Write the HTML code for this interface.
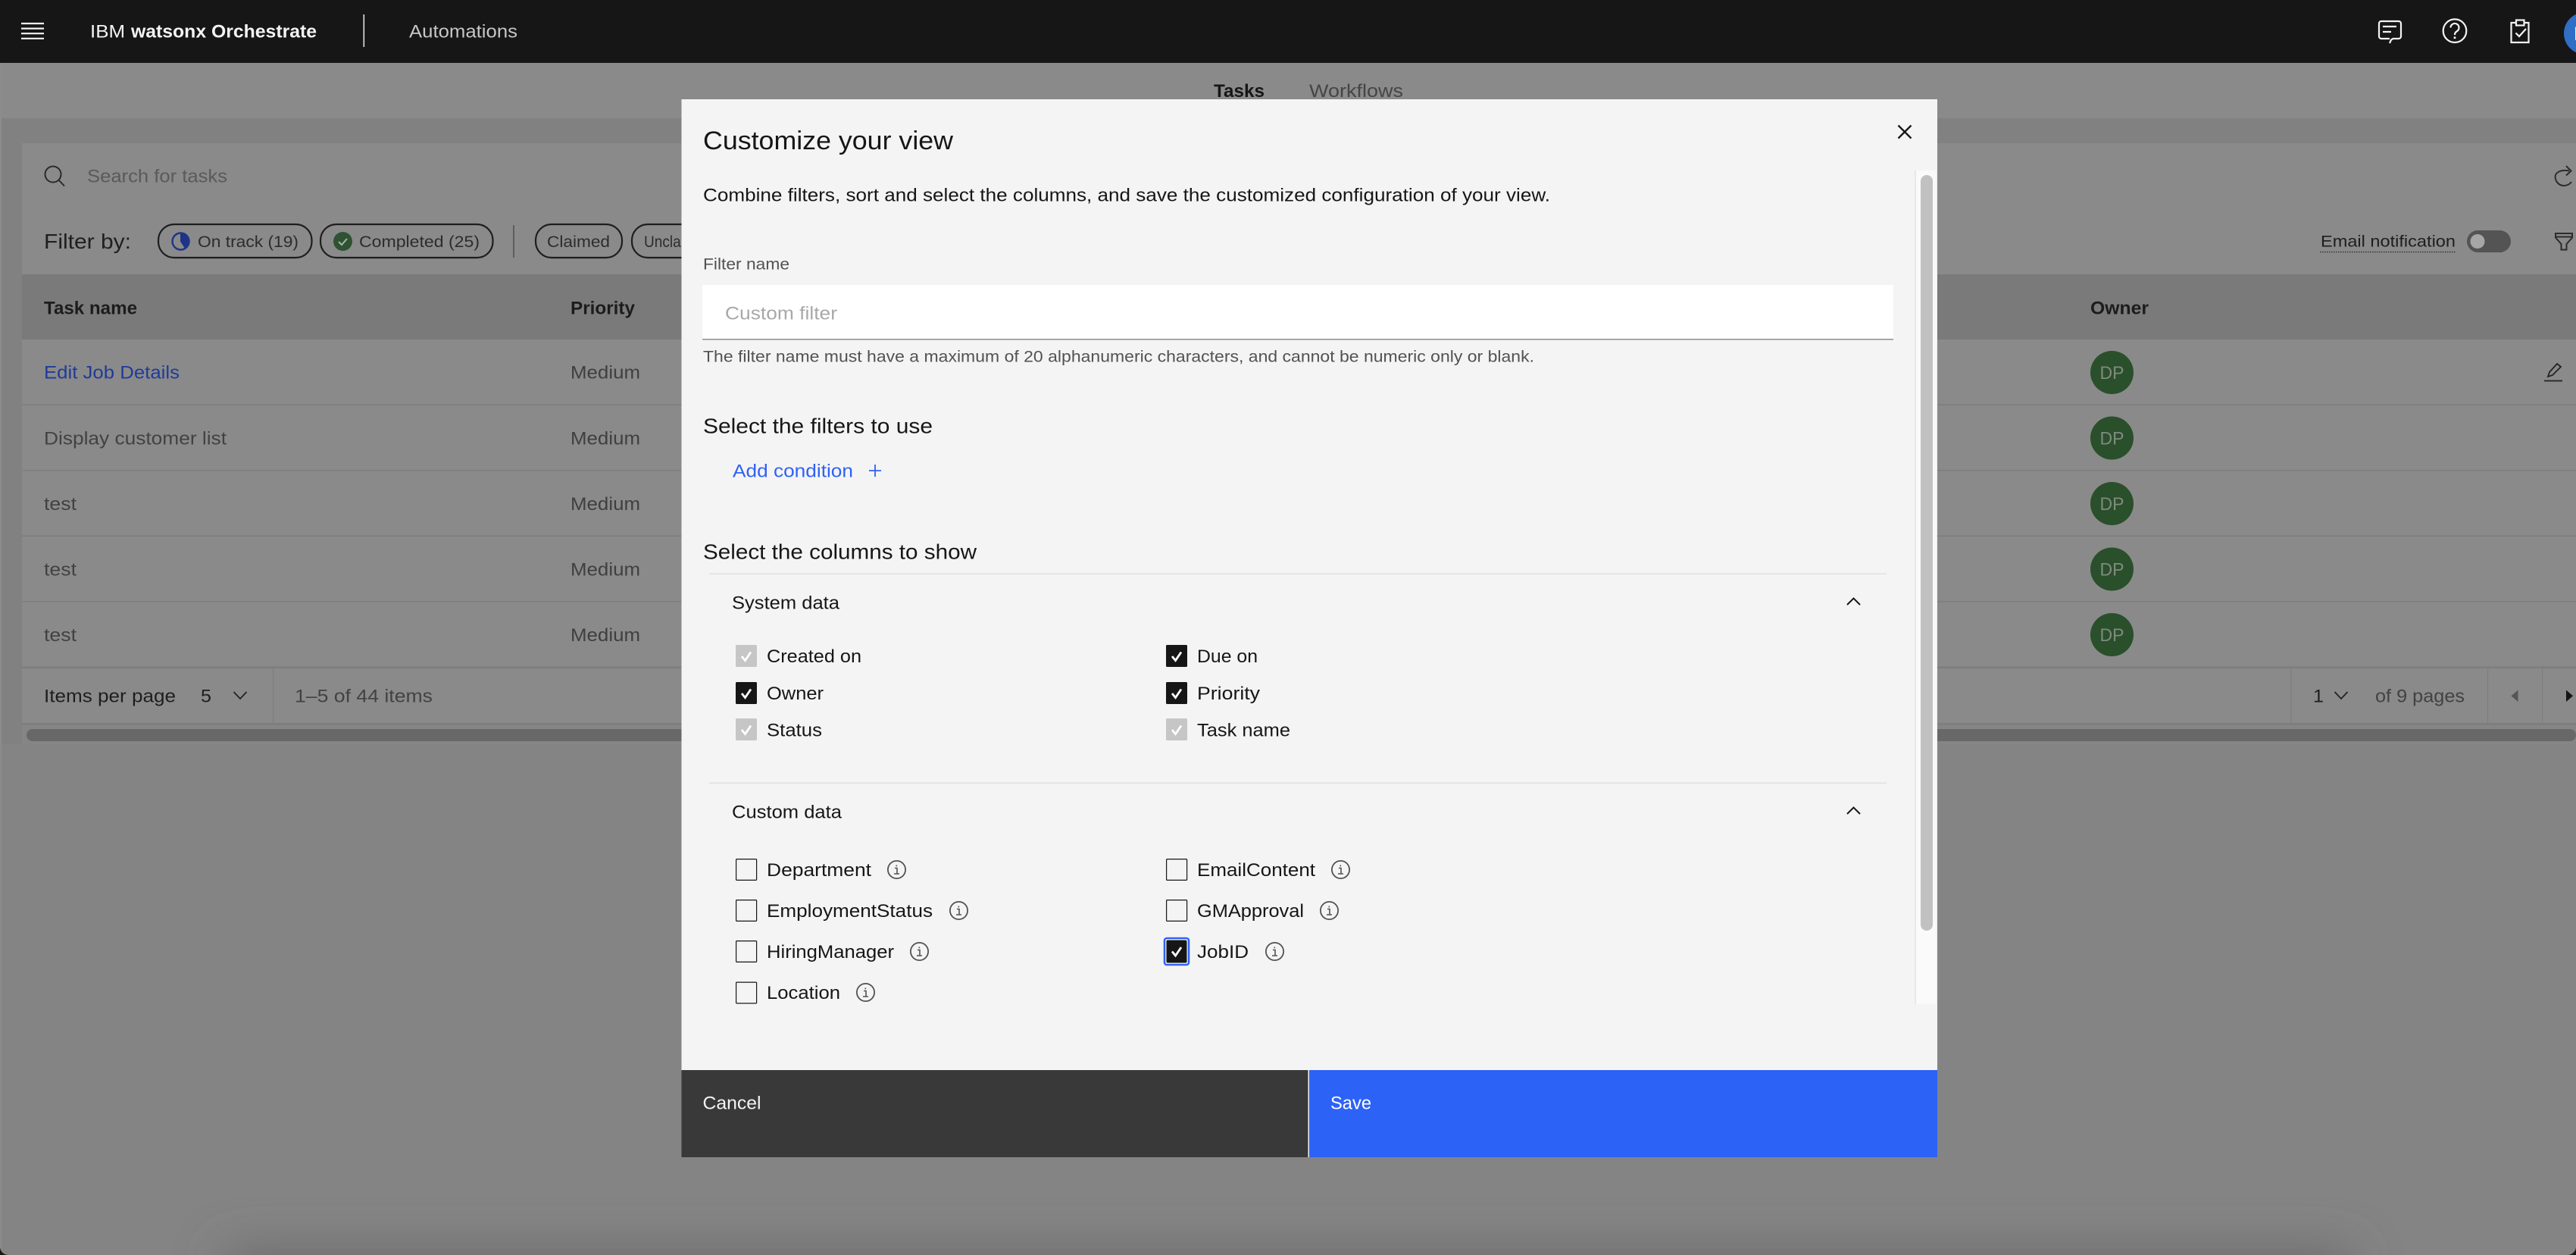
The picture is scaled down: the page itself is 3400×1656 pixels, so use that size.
<!DOCTYPE html>
<html lang="en"><head><meta charset="utf-8"><title>Customize your view</title>
<style>
html,body{margin:0;padding:0;width:3400px;height:1656px;overflow:hidden;background:#848484}
svg{display:block;font-family:"Liberation Sans",sans-serif;font-size:24px}
</style></head><body>
<svg width="3400" height="1656" viewBox="0 0 3400 1656" xmlns="http://www.w3.org/2000/svg">
<defs>
<filter id="blur" x="-10%" y="-200%" width="120%" height="500%"><feGaussianBlur stdDeviation="32"/></filter>
<symbol id="info" viewBox="0 0 25 25" overflow="visible"><circle cx="12.5" cy="12.5" r="11.6" fill="none" stroke="#525252" stroke-width="1.8"/><path d="M10 10.5h3v7M9 18h7M12.3 6.5v1.8" fill="none" stroke="#525252" stroke-width="1.6"/></symbol>
</defs>
<!-- page background -->
<rect width="3400" height="1656" fill="#848484"/>
<rect x="0" y="83" width="3400" height="73" fill="#8a8a8a"/>
<rect x="0" y="156" width="3400" height="33" fill="#818181"/>
<rect x="0" y="156" width="29" height="826" fill="#818181"/>
<rect x="0" y="83" width="2" height="1573" fill="#8c8c8c"/>
<rect x="300" y="1655" width="2800" height="50" fill="#666" filter="url(#blur)"/>
<path d="M0 1645v11h11a11 11 0 0 1-11-11zM3400 1645v11h-11a11 11 0 0 0 11-11z" fill="#1a1a12"/>
<!-- header -->
<rect width="3400" height="83" fill="#161616"/>
<path d="M28 31h30M28 37.6h30M28 44.2h30M28 50.8h30" stroke="#f4f4f4" stroke-width="2.2"/>
<text x="119" y="49.5" fill="#f4f4f4" textLength="46" lengthAdjust="spacingAndGlyphs">IBM</text>
<text x="173" y="49.5" fill="#f4f4f4" font-weight="700" textLength="245" lengthAdjust="spacingAndGlyphs">watsonx Orchestrate</text>
<rect x="479.5" y="19" width="1.6" height="43" fill="#e0e0e0"/>
<text x="540" y="49.5" fill="#c6c6c6" textLength="143" lengthAdjust="spacingAndGlyphs">Automations</text>
<g stroke="#f4f4f4" fill="none" stroke-width="2.2">
<path d="M3143 28h23a3 3 0 0 1 3 3v17a3 3 0 0 1-3 3h-7.500l-2.500 1.500-2 4.500M3154 51h-11a3 3 0 0 1-3-3V31a3 3 0 0 1 3-3"/>
<path d="M3145 35h18M3145 42h11"/>
<circle cx="3240" cy="40.700" r="15.300"/>
<path d="M3234.500 36.500a5.500 5.500 0 1 1 8.500 4.600c-2 1.300-3 2.400-3 4.500v.5"/>
<path d="M3321 30h-6.500v26h23V30H3331"/>
<rect x="3321" y="26.500" width="10.500" height="7"/>
<path d="M3320.500 43.500l4.500 4.500 9-10"/>
</g>
<circle cx="3240" cy="49.700" r="1.500" fill="#f4f4f4"/>
<circle cx="3412" cy="44" r="28" fill="#2f6fc6"/>
<text x="3397" y="53" fill="#fff" font-size="25">DP</text>
<!-- tabs -->
<text x="1602" y="128" fill="#161616" font-weight="700" textLength="67" lengthAdjust="spacingAndGlyphs">Tasks</text>
<text x="1728" y="128" fill="#454545" textLength="124" lengthAdjust="spacingAndGlyphs">Workflows</text>
<!-- panel -->
<rect x="29" y="189" width="3371" height="793" fill="#8a8a8a"/>
<circle cx="70" cy="230" r="10.500" fill="none" stroke="#2b2b2b" stroke-width="2"/>
<path d="M77.500 237.500l7.500 8" stroke="#2b2b2b" stroke-width="2"/>
<text x="115" y="240.500" fill="#5a5a5a" textLength="185" lengthAdjust="spacingAndGlyphs">Search for tasks</text>
<path d="M3391 225.500C3378 223 3372.600 229 3372.600 233C3372.600 240 3378 245 3384 245C3388 245 3392 243 3394 240M3387 219l6.500 6.500-6.500 6" fill="none" stroke="#2b2b2b" stroke-width="2"/>
<text x="58" y="328" fill="#1f1f1f" font-size="28" textLength="115" lengthAdjust="spacingAndGlyphs">Filter by:</text>
<!-- chips -->
<g fill="none" stroke="#1e1e1e" stroke-width="2.200">
<rect x="209" y="296" width="202.500" height="44" rx="21"/>
<rect x="423" y="296" width="227.500" height="44" rx="21"/>
<rect x="707" y="296" width="114" height="44" rx="21"/>
<rect x="834" y="296" width="120" height="44" rx="21"/>
</g>
<rect x="677" y="297" width="2" height="43" fill="#5e5e5e"/>
<circle cx="238.500" cy="318.500" r="11" fill="none" stroke="#1f3488" stroke-width="2.400"/>
<path d="M238.500 307.500a11 11 0 0 1 6 20.200l-6-9.200z" fill="#1f3488" stroke="#1f3488"/>
<circle cx="452.500" cy="318.500" r="12.500" fill="#2e5232"/>
<path d="M447 319l4 4 7-8" fill="none" stroke="#a6b5a6" stroke-width="2"/>
<text x="261" y="326" font-size="21" fill="#2c2c2c" textLength="133" lengthAdjust="spacingAndGlyphs">On track (19)</text>
<text x="474" y="326" font-size="21" fill="#2c2c2c" textLength="159" lengthAdjust="spacingAndGlyphs">Completed (25)</text>
<text x="722" y="326" font-size="21" fill="#2c2c2c" textLength="83" lengthAdjust="spacingAndGlyphs">Claimed</text>
<text x="850" y="326" font-size="21" fill="#2c2c2c" textLength="90" lengthAdjust="spacingAndGlyphs">Unclaimed</text>
<!-- right toolbar -->
<text x="3063" y="325.500" font-size="21" fill="#1e1e1e" textLength="178" lengthAdjust="spacingAndGlyphs">Email notification</text>
<path d="M3062 332.500h180" stroke="#2b2b2b" stroke-width="1.200" stroke-dasharray="1.500 1.500"/>
<rect x="3256" y="304" width="58" height="29" rx="14.500" fill="#545454"/>
<circle cx="3270" cy="318.500" r="9.500" fill="#a6a6a6"/>
<path d="M3373 308h22v5.500l-7.500 8.500v7.500h-7V322l-7.500-8.500zM3373 312.500h22" fill="none" stroke="#2b2b2b" stroke-width="2"/>
<!-- table header -->
<rect x="29" y="362" width="3371" height="86" fill="#7a7a7a"/>
<text x="58" y="414.500" font-weight="700" fill="#1c1c1c" textLength="123" lengthAdjust="spacingAndGlyphs">Task name</text>
<text x="753" y="414.500" font-weight="700" fill="#1c1c1c" textLength="85" lengthAdjust="spacingAndGlyphs">Priority</text>
<text x="2759" y="414.500" font-weight="700" fill="#1c1c1c" textLength="77" lengthAdjust="spacingAndGlyphs">Owner</text>
<!-- rows -->
<g fill="#7d7d7d">
<rect x="29" y="533.500" width="3371" height="1.500"/><rect x="29" y="620" width="3371" height="1.500"/><rect x="29" y="706.500" width="3371" height="1.500"/><rect x="29" y="793" width="3371" height="1.500"/>
<rect x="29" y="879.500" width="3371" height="2.500"/><rect x="29" y="954" width="3371" height="2.500"/>
<rect x="360" y="882" width="1.200" height="72"/><rect x="3023.500" y="882" width="1.200" height="72"/><rect x="3283" y="882" width="1.200" height="72"/><rect x="3355" y="882" width="1.200" height="72"/>
</g>
<text x="58" y="499.500" fill="#1f3b99" textLength="179" lengthAdjust="spacingAndGlyphs">Edit Job Details</text>
<text x="58" y="586.500" fill="#424242" textLength="241" lengthAdjust="spacingAndGlyphs">Display customer list</text>
<text x="58" y="673" fill="#424242" textLength="43" lengthAdjust="spacingAndGlyphs">test</text>
<text x="58" y="759.500" fill="#424242" textLength="43" lengthAdjust="spacingAndGlyphs">test</text>
<text x="58" y="846" fill="#424242" textLength="43" lengthAdjust="spacingAndGlyphs">test</text>
<g fill="#3f3f3f">
<text x="753" y="499.500" textLength="92" lengthAdjust="spacingAndGlyphs">Medium</text>
<text x="753" y="586.500" textLength="92" lengthAdjust="spacingAndGlyphs">Medium</text>
<text x="753" y="673" textLength="92" lengthAdjust="spacingAndGlyphs">Medium</text>
<text x="753" y="759.500" textLength="92" lengthAdjust="spacingAndGlyphs">Medium</text>
<text x="753" y="846" textLength="92" lengthAdjust="spacingAndGlyphs">Medium</text>
</g>
<g fill="#2a4f2b">
<circle cx="2787.500" cy="491.500" r="28.500"/><circle cx="2787.500" cy="578" r="28.500"/><circle cx="2787.500" cy="664.500" r="28.500"/><circle cx="2787.500" cy="751" r="28.500"/><circle cx="2787.500" cy="837.500" r="28.500"/>
</g>
<g fill="#808a80">
<text x="2771.500" y="500" textLength="32" lengthAdjust="spacingAndGlyphs">DP</text>
<text x="2771.500" y="586.500" textLength="32" lengthAdjust="spacingAndGlyphs">DP</text>
<text x="2771.500" y="673" textLength="32" lengthAdjust="spacingAndGlyphs">DP</text>
<text x="2771.500" y="759.500" textLength="32" lengthAdjust="spacingAndGlyphs">DP</text>
<text x="2771.500" y="846" textLength="32" lengthAdjust="spacingAndGlyphs">DP</text>
</g>
<path d="M3363 497l2-6 10-11 5 4-11 11zM3358 502.500h24" fill="none" stroke="#222" stroke-width="1.800"/>
<!-- pagination -->
<text x="58" y="926.500" fill="#1e1e1e" textLength="174" lengthAdjust="spacingAndGlyphs">Items per page</text>
<text x="265" y="926.500" fill="#1e1e1e" textLength="14" lengthAdjust="spacingAndGlyphs">5</text>
<path d="M308.500 913l8.500 9 8.500-9" fill="none" stroke="#222" stroke-width="1.800"/>
<text x="389" y="926.500" fill="#424242" textLength="182" lengthAdjust="spacingAndGlyphs">1–5 of 44 items</text>
<text x="3053" y="926.500" fill="#1e1e1e" textLength="14" lengthAdjust="spacingAndGlyphs">1</text>
<path d="M3081.500 913l8.500 9 8.500-9" fill="none" stroke="#222" stroke-width="1.800"/>
<text x="3135" y="926.500" fill="#424242" textLength="118" lengthAdjust="spacingAndGlyphs">of 9 pages</text>
<path d="M3323.500 910.500v15.500l-9-7.700z" fill="#555"/>
<path d="M3387 910.500v15.500l9-7.700z" fill="#161616"/>
<rect x="29" y="956.500" width="3371" height="25.500" fill="#858585"/>
<rect x="35" y="962" width="3365" height="16" rx="8" fill="#686868"/>
<!-- modal -->
<rect x="899.500" y="131" width="1657.500" height="1396" fill="#f4f4f4"/>
<text x="928" y="197" font-size="34.600" fill="#161616" textLength="330" lengthAdjust="spacingAndGlyphs">Customize your view</text>
<path d="M2505.500 165.500l17 17M2522.500 165.500l-17 17" stroke="#161616" stroke-width="2.300"/>
<text x="928" y="265.500" fill="#161616" textLength="1118" lengthAdjust="spacingAndGlyphs">Combine filters, sort and select the columns, and save the customized configuration of your view.</text>
<rect x="2527" y="225" width="2" height="1100" fill="#e8e8e8"/>
<rect x="2529" y="225" width="26" height="1100" fill="#fafafa"/>
<rect x="2535" y="231" width="16" height="997" rx="8" fill="#c1c1c1"/>
<text x="928" y="355.500" font-size="21" fill="#525252" textLength="114" lengthAdjust="spacingAndGlyphs">Filter name</text>
<rect x="927" y="376" width="1572" height="71" fill="#fff"/>
<rect x="927" y="447" width="1572" height="1.500" fill="#8d8d8d"/>
<text x="957" y="421.500" fill="#a8a8a8" textLength="148" lengthAdjust="spacingAndGlyphs">Custom filter</text>
<text x="928" y="477.500" font-size="21" fill="#525252" textLength="1097" lengthAdjust="spacingAndGlyphs">The filter name must have a maximum of 20 alphanumeric characters, and cannot be numeric only or blank.</text>
<text x="928" y="571.500" font-size="28" fill="#161616" textLength="303" lengthAdjust="spacingAndGlyphs">Select the filters to use</text>
<text x="967" y="629.500" fill="#2f62f5" textLength="159" lengthAdjust="spacingAndGlyphs">Add condition</text>
<path d="M1155 613v16M1147 621h16" stroke="#2f62f5" stroke-width="1.800"/>
<text x="928" y="737.500" font-size="28" fill="#161616" textLength="361" lengthAdjust="spacingAndGlyphs">Select the columns to show</text>
<rect x="936" y="756.500" width="1554" height="1.500" fill="#e0e0e0"/>
<text x="966" y="803.500" fill="#161616" textLength="142" lengthAdjust="spacingAndGlyphs">System data</text>
<path d="M2438 798l8.500-8.500 8.500 8.500" fill="none" stroke="#161616" stroke-width="2"/>
<!-- system checkboxes -->
<g fill="#c6c6c6">
<rect x="971" y="851" width="28" height="29" rx="1.500"/><rect x="971" y="948" width="28" height="29" rx="1.500"/><rect x="1539" y="948" width="28" height="29" rx="1.500"/>
</g>
<g fill="#161616">
<rect x="971" y="900" width="28" height="29" rx="1.500"/><rect x="1539" y="851" width="28" height="29" rx="1.500"/><rect x="1539" y="900" width="28" height="29" rx="1.500"/>
</g>
<g fill="none" stroke="#fff" stroke-width="2.800">
<path d="M979 866l4.500 5.500 7.500-11"/><path d="M979 915l4.500 5.500 7.500-11"/><path d="M979 963l4.500 5.500 7.500-11"/>
<path d="M1547 866l4.500 5.500 7.500-11"/><path d="M1547 915l4.500 5.500 7.500-11"/><path d="M1547 963l4.500 5.500 7.500-11"/>
</g>
<g fill="#161616">
<text x="1012" y="874" textLength="125" lengthAdjust="spacingAndGlyphs">Created on</text>
<text x="1012" y="923" textLength="75" lengthAdjust="spacingAndGlyphs">Owner</text>
<text x="1012" y="971.500" textLength="73" lengthAdjust="spacingAndGlyphs">Status</text>
<text x="1580" y="874" textLength="80" lengthAdjust="spacingAndGlyphs">Due on</text>
<text x="1580" y="923" textLength="83" lengthAdjust="spacingAndGlyphs">Priority</text>
<text x="1580" y="971.500" textLength="123" lengthAdjust="spacingAndGlyphs">Task name</text>
</g>
<rect x="936" y="1032.500" width="1554" height="1.500" fill="#e0e0e0"/>
<text x="966" y="1079.500" fill="#161616" textLength="145" lengthAdjust="spacingAndGlyphs">Custom data</text>
<path d="M2438 1074l8.500-8.500 8.500 8.500" fill="none" stroke="#161616" stroke-width="2"/>
<!-- custom checkboxes -->
<g fill="none" stroke="#161616" stroke-width="1.200">
<rect x="971.600" y="1133.600" width="27" height="27.800" rx="1"/>
<rect x="971.600" y="1187.600" width="27" height="27.800" rx="1"/>
<rect x="971.600" y="1241.600" width="27" height="27.800" rx="1"/>
<rect x="971.600" y="1296.100" width="27" height="27.800" rx="1"/>
<rect x="1539.600" y="1133.600" width="27" height="27.800" rx="1"/>
<rect x="1539.600" y="1187.600" width="27" height="27.800" rx="1"/>
</g>
<rect x="1537" y="1238" width="32" height="35" rx="3" fill="#fff" stroke="#2f62f5" stroke-width="2.600"/>
<rect x="1539.500" y="1240.500" width="27" height="30" rx="1.500" fill="#161616"/>
<path d="M1547 1255.500l4.500 5.500 7.500-11" fill="none" stroke="#fff" stroke-width="2.800"/>
<g fill="#161616">
<text x="1012" y="1156" textLength="138" lengthAdjust="spacingAndGlyphs">Department</text>
<text x="1012" y="1210" textLength="219" lengthAdjust="spacingAndGlyphs">EmploymentStatus</text>
<text x="1012" y="1264" textLength="168" lengthAdjust="spacingAndGlyphs">HiringManager</text>
<text x="1012" y="1318" textLength="97" lengthAdjust="spacingAndGlyphs">Location</text>
<text x="1580" y="1156" textLength="156" lengthAdjust="spacingAndGlyphs">EmailContent</text>
<text x="1580" y="1210" textLength="141" lengthAdjust="spacingAndGlyphs">GMApproval</text>
<text x="1580" y="1264" textLength="68" lengthAdjust="spacingAndGlyphs">JobID</text>
</g>
<use href="#info" x="1171" y="1135" width="25" height="25"/>
<use href="#info" x="1253" y="1189" width="25" height="25"/>
<use href="#info" x="1201" y="1243" width="25" height="25"/>
<use href="#info" x="1130" y="1297" width="25" height="25"/>
<use href="#info" x="1757" y="1135" width="25" height="25"/>
<use href="#info" x="1742" y="1189" width="25" height="25"/>
<use href="#info" x="1670" y="1243" width="25" height="25"/>
<!-- footer -->
<rect x="899.500" y="1412" width="827" height="115" fill="#393939"/>
<rect x="1728" y="1412" width="829" height="115" fill="#2c62f6"/>
<text x="927.500" y="1463.500" fill="#f4f4f4" textLength="77" lengthAdjust="spacingAndGlyphs">Cancel</text>
<text x="1756" y="1463.500" fill="#fff" textLength="54" lengthAdjust="spacingAndGlyphs">Save</text>
</svg>
</body></html>
